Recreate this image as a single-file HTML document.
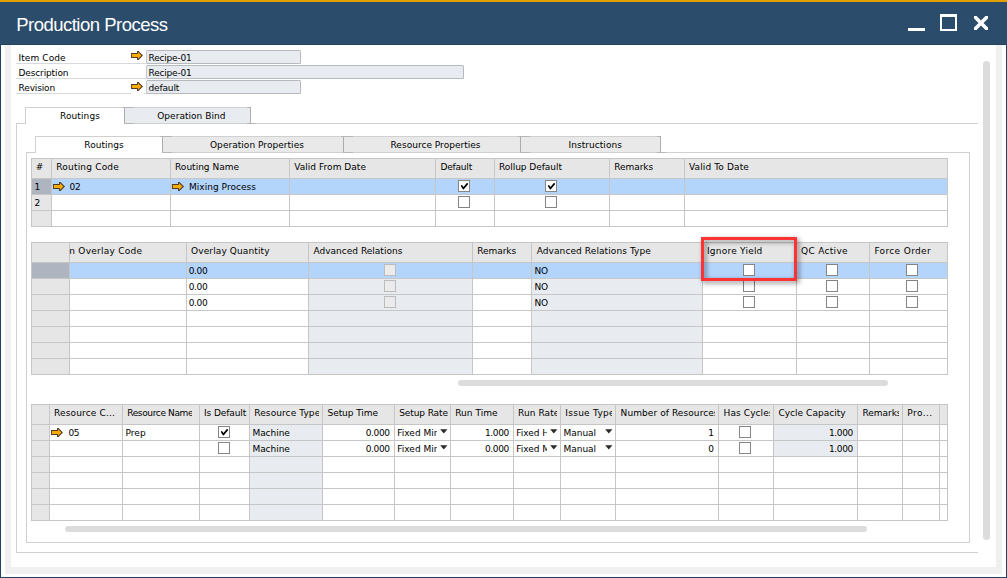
<!DOCTYPE html>
<html lang="en"><head><meta charset="utf-8"><title>Production Process</title>
<style>
html,body{margin:0;padding:0;background:#fff}
#w{position:relative;width:1007px;height:578px;overflow:hidden;font-family:"DejaVu Sans","Liberation Sans",sans-serif;font-size:9px;line-height:12px;color:#000}
#w div,#w svg.ar,#w span.t,#w span.title{position:absolute;box-sizing:content-box}
#w span.t,#w span.title{white-space:nowrap;display:block}
#w span.title{font-family:"Liberation Sans",sans-serif;font-size:18.5px;line-height:22px;color:#fff}
#w div.cb{width:10px;height:10px;border:1px solid #858585;background:#fff}
#w div.cb svg{position:absolute;left:0;top:0}
#w div.clip{overflow:hidden;height:12px}
#w div.clip span.t{left:0;top:0}
</style></head>
<body>
<div id="w">
<div style="left:0px;top:0px;width:1007px;height:578px;background:#fff;"></div>
<div style="left:0px;top:0px;width:1007px;height:2px;background:#e5a000;"></div>
<div style="left:0px;top:2px;width:1007px;height:43px;background:#2b4c6b;"></div>
<div style="left:0px;top:44px;width:1007px;height:1px;background:#234160;"></div>
<div style="left:0px;top:45px;width:1px;height:533px;background:#1f4566;"></div>
<div style="left:1006px;top:45px;width:1px;height:533px;background:#1f4566;"></div>
<div style="left:0px;top:577px;width:1007px;height:1px;background:#1f4566;"></div>
<div style="left:5px;top:45px;width:6px;height:529px;background:#f0f0f0;"></div>
<div style="left:996px;top:45px;width:6px;height:529px;background:#f0f0f0;"></div>
<div style="left:5px;top:567px;width:997px;height:7px;background:#f0f0f0;"></div>
<div style="left:908px;top:28px;width:17px;height:3px;background:#fff;"></div>
<div style="left:940px;top:14px;width:13px;height:12px;border:2px solid #fff;border-top-width:3px;background:transparent"></div>
<svg class="ar" style="left:973.5px;top:15.5px" width="14" height="14" viewBox="0 0 14 14"><path d="M-1 -1L15 15M15 -1L-1 15" stroke="#fff" stroke-width="3.6" fill="none"/></svg>
<div style="left:983px;top:61px;width:7px;height:479px;background:#dcdcdc;border-radius:3.5px"></div>
<div style="left:16px;top:63px;width:130px;height:1px;background:#d6dade;"></div>
<div style="left:146px;top:50px;width:153px;height:12px;background:#e8ecf0;border:1px solid #b6babf;border-left-color:#c4c8cc;border-radius:1.5px"></div>
<svg class="ar" style="left:131px;top:51px" width="12" height="9" viewBox="0 0 12 9"><path d="M0 2H6V0H7.5L12 4.5L7.5 9H6V7H0Z" fill="#4d3b2e"/><path d="M0.9 2.9H6.9V1L10.5 4.5L6.9 8V6.1H0.9Z" fill="#f9ab00"/></svg>
<div style="left:16px;top:78px;width:130px;height:1px;background:#d6dade;"></div>
<div style="left:146px;top:65px;width:316px;height:12px;background:#e8ecf0;border:1px solid #b6babf;border-left-color:#c4c8cc;border-radius:1.5px"></div>
<div style="left:16px;top:93px;width:115px;height:1px;background:#d6dade;"></div>
<div style="left:144px;top:93px;width:2px;height:1px;background:#d6dade;"></div>
<div style="left:146px;top:80px;width:153px;height:12px;background:#e8ecf0;border:1px solid #b6babf;border-left-color:#c4c8cc;border-radius:1.5px"></div>
<svg class="ar" style="left:131px;top:82px" width="12" height="9" viewBox="0 0 12 9"><path d="M0 2H6V0H7.5L12 4.5L7.5 9H6V7H0Z" fill="#4d3b2e"/><path d="M0.9 2.9H6.9V1L10.5 4.5L6.9 8V6.1H0.9Z" fill="#f9ab00"/></svg>
<div style="left:16px;top:123px;width:962px;height:1px;background:#d0d0d0;"></div>
<div style="left:16px;top:123px;width:1px;height:430px;background:#d0d0d0;"></div>
<div style="left:16px;top:552px;width:962px;height:1px;background:#d0d0d0;"></div>
<div style="left:25px;top:107px;width:98px;height:16px;background:#fff;border:1px solid #d0d0d0;border-bottom:none"></div>
<div style="left:125px;top:107px;width:125px;height:15px;background:#e8ecf0;border:1px solid #d0d0d0;border-left:none"></div>
<div style="left:124px;top:107px;width:1px;height:17px;background:#adadad;"></div>
<div style="left:122px;top:107px;width:12px;height:1px;background:#b6b6b6;"></div>
<div style="left:124px;top:123px;width:10px;height:1px;background:#b6b6b6;"></div>
<div style="left:250px;top:107px;width:1px;height:17px;background:#adadad;"></div>
<div style="left:247px;top:107px;width:3px;height:1px;background:#b6b6b6;"></div>
<div style="left:247px;top:123px;width:9px;height:1px;background:#b6b6b6;"></div>
<div style="left:26px;top:152px;width:944px;height:1px;background:#d0d0d0;"></div>
<div style="left:26px;top:152px;width:1px;height:391px;background:#d0d0d0;"></div>
<div style="left:26px;top:542px;width:944px;height:1px;background:#d0d0d0;"></div>
<div style="left:969px;top:152px;width:1px;height:391px;background:#d0d0d0;"></div>
<div style="left:35px;top:136px;width:126px;height:16px;background:#fff;border:1px solid #d0d0d0;border-bottom:none"></div>
<div style="left:163px;top:136px;width:180px;height:15px;background:#e9e9e9;border:1px solid #d0d0d0;border-left:none"></div>
<div style="left:344px;top:136px;width:176px;height:15px;background:#e9e9e9;border:1px solid #d0d0d0;border-left:none"></div>
<div style="left:521px;top:136px;width:139px;height:15px;background:#e9e9e9;border:1px solid #d0d0d0;border-left:none"></div>
<div style="left:162px;top:136px;width:1px;height:17px;background:#adadad;"></div>
<div style="left:160px;top:136px;width:12px;height:1px;background:#b6b6b6;"></div>
<div style="left:162px;top:152px;width:10px;height:1px;background:#b6b6b6;"></div>
<div style="left:343px;top:136px;width:1px;height:17px;background:#adadad;"></div>
<div style="left:341px;top:136px;width:12px;height:1px;background:#b6b6b6;"></div>
<div style="left:343px;top:152px;width:10px;height:1px;background:#b6b6b6;"></div>
<div style="left:520px;top:136px;width:1px;height:17px;background:#adadad;"></div>
<div style="left:518px;top:136px;width:12px;height:1px;background:#b6b6b6;"></div>
<div style="left:520px;top:152px;width:10px;height:1px;background:#b6b6b6;"></div>
<div style="left:660px;top:136px;width:1px;height:17px;background:#adadad;"></div>
<div style="left:657px;top:136px;width:3px;height:1px;background:#b6b6b6;"></div>
<div style="left:657px;top:152px;width:9px;height:1px;background:#b6b6b6;"></div>
<div style="left:31px;top:158px;width:917px;height:69px;background:#c6c6c6;"></div>
<div style="left:32px;top:159px;width:19px;height:19px;background:#e6e6e6;"></div>
<div style="left:52px;top:159px;width:118px;height:19px;background:#e6e6e6;"></div>
<div style="left:171px;top:159px;width:118px;height:19px;background:#e6e6e6;"></div>
<div style="left:290px;top:159px;width:145px;height:19px;background:#e6e6e6;"></div>
<div style="left:436px;top:159px;width:58px;height:19px;background:#e6e6e6;"></div>
<div style="left:495px;top:159px;width:114px;height:19px;background:#e6e6e6;"></div>
<div style="left:610px;top:159px;width:74px;height:19px;background:#e6e6e6;"></div>
<div style="left:685px;top:159px;width:262px;height:19px;background:#e6e6e6;"></div>
<div style="left:32px;top:179px;width:19px;height:15px;background:#aeb5c1;"></div>
<div style="left:52px;top:179px;width:118px;height:15px;background:#b3d4fb;"></div>
<div style="left:171px;top:179px;width:118px;height:15px;background:#b3d4fb;"></div>
<div style="left:290px;top:179px;width:145px;height:15px;background:#b3d4fb;"></div>
<div style="left:436px;top:179px;width:58px;height:15px;background:#b3d4fb;"></div>
<div style="left:495px;top:179px;width:114px;height:15px;background:#b3d4fb;"></div>
<div style="left:610px;top:179px;width:74px;height:15px;background:#b3d4fb;"></div>
<div style="left:685px;top:179px;width:262px;height:15px;background:#b3d4fb;"></div>
<div style="left:32px;top:195px;width:19px;height:15px;background:#e6e6e6;"></div>
<div style="left:52px;top:195px;width:118px;height:15px;background:#fff;"></div>
<div style="left:171px;top:195px;width:118px;height:15px;background:#fff;"></div>
<div style="left:290px;top:195px;width:145px;height:15px;background:#fff;"></div>
<div style="left:436px;top:195px;width:58px;height:15px;background:#fff;"></div>
<div style="left:495px;top:195px;width:114px;height:15px;background:#fff;"></div>
<div style="left:610px;top:195px;width:74px;height:15px;background:#fff;"></div>
<div style="left:685px;top:195px;width:262px;height:15px;background:#fff;"></div>
<div style="left:32px;top:211px;width:19px;height:15px;background:#e6e6e6;"></div>
<div style="left:52px;top:211px;width:118px;height:15px;background:#fff;"></div>
<div style="left:171px;top:211px;width:118px;height:15px;background:#fff;"></div>
<div style="left:290px;top:211px;width:145px;height:15px;background:#fff;"></div>
<div style="left:436px;top:211px;width:58px;height:15px;background:#fff;"></div>
<div style="left:495px;top:211px;width:114px;height:15px;background:#fff;"></div>
<div style="left:610px;top:211px;width:74px;height:15px;background:#fff;"></div>
<div style="left:685px;top:211px;width:262px;height:15px;background:#fff;"></div>
<svg class="ar" style="left:53px;top:182px" width="12" height="9" viewBox="0 0 12 9"><path d="M0 2H6V0H7.5L12 4.5L7.5 9H6V7H0Z" fill="#4d3b2e"/><path d="M0.9 2.9H6.9V1L10.5 4.5L6.9 8V6.1H0.9Z" fill="#f9ab00"/></svg>
<svg class="ar" style="left:172px;top:182px" width="12" height="9" viewBox="0 0 12 9"><path d="M0 2H6V0H7.5L12 4.5L7.5 9H6V7H0Z" fill="#4d3b2e"/><path d="M0.9 2.9H6.9V1L10.5 4.5L6.9 8V6.1H0.9Z" fill="#f9ab00"/></svg>
<div class="cb" style="left:458px;top:180px"><svg width="10" height="10" viewBox="0 0 10 10"><path d="M2.7 4.9L4.4 7.5L8.2 2.9" fill="none" stroke="#000" stroke-width="1.7" stroke-linecap="round" stroke-linejoin="round"/></svg></div>
<div class="cb" style="left:545px;top:180px"><svg width="10" height="10" viewBox="0 0 10 10"><path d="M2.7 4.9L4.4 7.5L8.2 2.9" fill="none" stroke="#000" stroke-width="1.7" stroke-linecap="round" stroke-linejoin="round"/></svg></div>
<div class="cb" style="left:458px;top:196px"></div>
<div class="cb" style="left:545px;top:196px"></div>
<div style="left:31px;top:242px;width:917px;height:133px;background:#c6c6c6;"></div>
<div style="left:32px;top:243px;width:37px;height:19px;background:#e6e6e6;"></div>
<div style="left:70px;top:243px;width:116px;height:19px;background:#e6e6e6;"></div>
<div style="left:187px;top:243px;width:121px;height:19px;background:#e6e6e6;"></div>
<div style="left:309px;top:243px;width:163px;height:19px;background:#e6e6e6;"></div>
<div style="left:473px;top:243px;width:58px;height:19px;background:#e6e6e6;"></div>
<div style="left:532px;top:243px;width:170px;height:19px;background:#e6e6e6;"></div>
<div style="left:703px;top:243px;width:93px;height:19px;background:#e6e6e6;"></div>
<div style="left:797px;top:243px;width:72px;height:19px;background:#e6e6e6;"></div>
<div style="left:870px;top:243px;width:77px;height:19px;background:#e6e6e6;"></div>
<div style="left:32px;top:263px;width:37px;height:15px;background:#aeb5c1;"></div>
<div style="left:70px;top:263px;width:116px;height:15px;background:#b3d4fb;"></div>
<div style="left:187px;top:263px;width:121px;height:15px;background:#b3d4fb;"></div>
<div style="left:309px;top:263px;width:163px;height:15px;background:#b3d4fb;"></div>
<div style="left:473px;top:263px;width:58px;height:15px;background:#b3d4fb;"></div>
<div style="left:532px;top:263px;width:170px;height:15px;background:#b3d4fb;"></div>
<div style="left:703px;top:263px;width:93px;height:15px;background:#b3d4fb;"></div>
<div style="left:797px;top:263px;width:72px;height:15px;background:#b3d4fb;"></div>
<div style="left:870px;top:263px;width:77px;height:15px;background:#b3d4fb;"></div>
<div style="left:32px;top:279px;width:37px;height:15px;background:#e6e6e6;"></div>
<div style="left:70px;top:279px;width:116px;height:15px;background:#fff;"></div>
<div style="left:187px;top:279px;width:121px;height:15px;background:#fff;"></div>
<div style="left:309px;top:279px;width:163px;height:15px;background:#e8ecf0;"></div>
<div style="left:473px;top:279px;width:58px;height:15px;background:#fff;"></div>
<div style="left:532px;top:279px;width:170px;height:15px;background:#e8ecf0;"></div>
<div style="left:703px;top:279px;width:93px;height:15px;background:#fff;"></div>
<div style="left:797px;top:279px;width:72px;height:15px;background:#fff;"></div>
<div style="left:870px;top:279px;width:77px;height:15px;background:#fff;"></div>
<div style="left:32px;top:295px;width:37px;height:15px;background:#e6e6e6;"></div>
<div style="left:70px;top:295px;width:116px;height:15px;background:#fff;"></div>
<div style="left:187px;top:295px;width:121px;height:15px;background:#fff;"></div>
<div style="left:309px;top:295px;width:163px;height:15px;background:#e8ecf0;"></div>
<div style="left:473px;top:295px;width:58px;height:15px;background:#fff;"></div>
<div style="left:532px;top:295px;width:170px;height:15px;background:#e8ecf0;"></div>
<div style="left:703px;top:295px;width:93px;height:15px;background:#fff;"></div>
<div style="left:797px;top:295px;width:72px;height:15px;background:#fff;"></div>
<div style="left:870px;top:295px;width:77px;height:15px;background:#fff;"></div>
<div style="left:32px;top:311px;width:37px;height:15px;background:#e6e6e6;"></div>
<div style="left:70px;top:311px;width:116px;height:15px;background:#fff;"></div>
<div style="left:187px;top:311px;width:121px;height:15px;background:#fff;"></div>
<div style="left:309px;top:311px;width:163px;height:15px;background:#e8ecf0;"></div>
<div style="left:473px;top:311px;width:58px;height:15px;background:#fff;"></div>
<div style="left:532px;top:311px;width:170px;height:15px;background:#e8ecf0;"></div>
<div style="left:703px;top:311px;width:93px;height:15px;background:#fff;"></div>
<div style="left:797px;top:311px;width:72px;height:15px;background:#fff;"></div>
<div style="left:870px;top:311px;width:77px;height:15px;background:#fff;"></div>
<div style="left:32px;top:327px;width:37px;height:15px;background:#e6e6e6;"></div>
<div style="left:70px;top:327px;width:116px;height:15px;background:#fff;"></div>
<div style="left:187px;top:327px;width:121px;height:15px;background:#fff;"></div>
<div style="left:309px;top:327px;width:163px;height:15px;background:#e8ecf0;"></div>
<div style="left:473px;top:327px;width:58px;height:15px;background:#fff;"></div>
<div style="left:532px;top:327px;width:170px;height:15px;background:#e8ecf0;"></div>
<div style="left:703px;top:327px;width:93px;height:15px;background:#fff;"></div>
<div style="left:797px;top:327px;width:72px;height:15px;background:#fff;"></div>
<div style="left:870px;top:327px;width:77px;height:15px;background:#fff;"></div>
<div style="left:32px;top:343px;width:37px;height:15px;background:#e6e6e6;"></div>
<div style="left:70px;top:343px;width:116px;height:15px;background:#fff;"></div>
<div style="left:187px;top:343px;width:121px;height:15px;background:#fff;"></div>
<div style="left:309px;top:343px;width:163px;height:15px;background:#e8ecf0;"></div>
<div style="left:473px;top:343px;width:58px;height:15px;background:#fff;"></div>
<div style="left:532px;top:343px;width:170px;height:15px;background:#e8ecf0;"></div>
<div style="left:703px;top:343px;width:93px;height:15px;background:#fff;"></div>
<div style="left:797px;top:343px;width:72px;height:15px;background:#fff;"></div>
<div style="left:870px;top:343px;width:77px;height:15px;background:#fff;"></div>
<div style="left:32px;top:359px;width:37px;height:15px;background:#e6e6e6;"></div>
<div style="left:70px;top:359px;width:116px;height:15px;background:#fff;"></div>
<div style="left:187px;top:359px;width:121px;height:15px;background:#fff;"></div>
<div style="left:309px;top:359px;width:163px;height:15px;background:#e8ecf0;"></div>
<div style="left:473px;top:359px;width:58px;height:15px;background:#fff;"></div>
<div style="left:532px;top:359px;width:170px;height:15px;background:#e8ecf0;"></div>
<div style="left:703px;top:359px;width:93px;height:15px;background:#fff;"></div>
<div style="left:797px;top:359px;width:72px;height:15px;background:#fff;"></div>
<div style="left:870px;top:359px;width:77px;height:15px;background:#fff;"></div>
<div class="cb" style="left:384px;top:264px;background:#ebebeb;border-color:#bcbcbc"></div>
<div class="cb" style="left:743px;top:264px"></div>
<div class="cb" style="left:826px;top:264px"></div>
<div class="cb" style="left:906px;top:264px"></div>
<div class="cb" style="left:384px;top:280px;background:#ebebeb;border-color:#bcbcbc"></div>
<div class="cb" style="left:743px;top:280px"></div>
<div class="cb" style="left:826px;top:280px"></div>
<div class="cb" style="left:906px;top:280px"></div>
<div class="cb" style="left:384px;top:296px;background:#ebebeb;border-color:#bcbcbc"></div>
<div class="cb" style="left:743px;top:296px"></div>
<div class="cb" style="left:826px;top:296px"></div>
<div class="cb" style="left:906px;top:296px"></div>
<div style="left:458px;top:380px;width:430px;height:6px;background:#dcdcdc;border-radius:3px"></div>
<div style="left:701px;top:237px;width:90px;height:38px;border:3px solid #ff3333;background:transparent;filter:drop-shadow(2px 2px 2.5px rgba(0,0,0,.5))"></div>
<div style="left:31px;top:404px;width:917px;height:117px;background:#c6c6c6;"></div>
<div style="left:32px;top:405px;width:17px;height:19px;background:#e6e6e6;"></div>
<div style="left:50px;top:405px;width:72px;height:19px;background:#e6e6e6;"></div>
<div style="left:123px;top:405px;width:76px;height:19px;background:#e6e6e6;"></div>
<div style="left:200px;top:405px;width:49px;height:19px;background:#e6e6e6;"></div>
<div style="left:250px;top:405px;width:72px;height:19px;background:#e6e6e6;"></div>
<div style="left:323px;top:405px;width:71px;height:19px;background:#e6e6e6;"></div>
<div style="left:395px;top:405px;width:55px;height:19px;background:#e6e6e6;"></div>
<div style="left:451px;top:405px;width:62px;height:19px;background:#e6e6e6;"></div>
<div style="left:514px;top:405px;width:46px;height:19px;background:#e6e6e6;"></div>
<div style="left:561px;top:405px;width:54px;height:19px;background:#e6e6e6;"></div>
<div style="left:616px;top:405px;width:102px;height:19px;background:#e6e6e6;"></div>
<div style="left:719px;top:405px;width:54px;height:19px;background:#e6e6e6;"></div>
<div style="left:774px;top:405px;width:83px;height:19px;background:#e6e6e6;"></div>
<div style="left:858px;top:405px;width:44px;height:19px;background:#e6e6e6;"></div>
<div style="left:903px;top:405px;width:36px;height:19px;background:#e6e6e6;"></div>
<div style="left:940px;top:405px;width:7px;height:19px;background:#e6e6e6;"></div>
<div style="left:32px;top:425px;width:17px;height:15px;background:#e6e6e6;"></div>
<div style="left:50px;top:425px;width:72px;height:15px;background:#fff;"></div>
<div style="left:123px;top:425px;width:76px;height:15px;background:#fff;"></div>
<div style="left:200px;top:425px;width:49px;height:15px;background:#fff;"></div>
<div style="left:250px;top:425px;width:72px;height:15px;background:#e8ecf0;"></div>
<div style="left:323px;top:425px;width:71px;height:15px;background:#fff;"></div>
<div style="left:395px;top:425px;width:55px;height:15px;background:#fff;"></div>
<div style="left:451px;top:425px;width:62px;height:15px;background:#fff;"></div>
<div style="left:514px;top:425px;width:46px;height:15px;background:#fff;"></div>
<div style="left:561px;top:425px;width:54px;height:15px;background:#fff;"></div>
<div style="left:616px;top:425px;width:102px;height:15px;background:#fff;"></div>
<div style="left:719px;top:425px;width:54px;height:15px;background:#fff;"></div>
<div style="left:774px;top:425px;width:83px;height:15px;background:#e8ecf0;"></div>
<div style="left:858px;top:425px;width:44px;height:15px;background:#fff;"></div>
<div style="left:903px;top:425px;width:36px;height:15px;background:#fff;"></div>
<div style="left:940px;top:425px;width:7px;height:15px;background:#fff;"></div>
<div style="left:32px;top:441px;width:17px;height:15px;background:#e6e6e6;"></div>
<div style="left:50px;top:441px;width:72px;height:15px;background:#fff;"></div>
<div style="left:123px;top:441px;width:76px;height:15px;background:#fff;"></div>
<div style="left:200px;top:441px;width:49px;height:15px;background:#fff;"></div>
<div style="left:250px;top:441px;width:72px;height:15px;background:#e8ecf0;"></div>
<div style="left:323px;top:441px;width:71px;height:15px;background:#fff;"></div>
<div style="left:395px;top:441px;width:55px;height:15px;background:#fff;"></div>
<div style="left:451px;top:441px;width:62px;height:15px;background:#fff;"></div>
<div style="left:514px;top:441px;width:46px;height:15px;background:#fff;"></div>
<div style="left:561px;top:441px;width:54px;height:15px;background:#fff;"></div>
<div style="left:616px;top:441px;width:102px;height:15px;background:#fff;"></div>
<div style="left:719px;top:441px;width:54px;height:15px;background:#fff;"></div>
<div style="left:774px;top:441px;width:83px;height:15px;background:#e8ecf0;"></div>
<div style="left:858px;top:441px;width:44px;height:15px;background:#fff;"></div>
<div style="left:903px;top:441px;width:36px;height:15px;background:#fff;"></div>
<div style="left:940px;top:441px;width:7px;height:15px;background:#fff;"></div>
<div style="left:32px;top:457px;width:17px;height:15px;background:#e6e6e6;"></div>
<div style="left:50px;top:457px;width:72px;height:15px;background:#fff;"></div>
<div style="left:123px;top:457px;width:76px;height:15px;background:#fff;"></div>
<div style="left:200px;top:457px;width:49px;height:15px;background:#fff;"></div>
<div style="left:250px;top:457px;width:72px;height:15px;background:#e8ecf0;"></div>
<div style="left:323px;top:457px;width:71px;height:15px;background:#fff;"></div>
<div style="left:395px;top:457px;width:55px;height:15px;background:#fff;"></div>
<div style="left:451px;top:457px;width:62px;height:15px;background:#fff;"></div>
<div style="left:514px;top:457px;width:46px;height:15px;background:#fff;"></div>
<div style="left:561px;top:457px;width:54px;height:15px;background:#fff;"></div>
<div style="left:616px;top:457px;width:102px;height:15px;background:#fff;"></div>
<div style="left:719px;top:457px;width:54px;height:15px;background:#fff;"></div>
<div style="left:774px;top:457px;width:83px;height:15px;background:#fff;"></div>
<div style="left:858px;top:457px;width:44px;height:15px;background:#fff;"></div>
<div style="left:903px;top:457px;width:36px;height:15px;background:#fff;"></div>
<div style="left:940px;top:457px;width:7px;height:15px;background:#fff;"></div>
<div style="left:32px;top:473px;width:17px;height:15px;background:#e6e6e6;"></div>
<div style="left:50px;top:473px;width:72px;height:15px;background:#fff;"></div>
<div style="left:123px;top:473px;width:76px;height:15px;background:#fff;"></div>
<div style="left:200px;top:473px;width:49px;height:15px;background:#fff;"></div>
<div style="left:250px;top:473px;width:72px;height:15px;background:#e8ecf0;"></div>
<div style="left:323px;top:473px;width:71px;height:15px;background:#fff;"></div>
<div style="left:395px;top:473px;width:55px;height:15px;background:#fff;"></div>
<div style="left:451px;top:473px;width:62px;height:15px;background:#fff;"></div>
<div style="left:514px;top:473px;width:46px;height:15px;background:#fff;"></div>
<div style="left:561px;top:473px;width:54px;height:15px;background:#fff;"></div>
<div style="left:616px;top:473px;width:102px;height:15px;background:#fff;"></div>
<div style="left:719px;top:473px;width:54px;height:15px;background:#fff;"></div>
<div style="left:774px;top:473px;width:83px;height:15px;background:#fff;"></div>
<div style="left:858px;top:473px;width:44px;height:15px;background:#fff;"></div>
<div style="left:903px;top:473px;width:36px;height:15px;background:#fff;"></div>
<div style="left:940px;top:473px;width:7px;height:15px;background:#fff;"></div>
<div style="left:32px;top:489px;width:17px;height:15px;background:#e6e6e6;"></div>
<div style="left:50px;top:489px;width:72px;height:15px;background:#fff;"></div>
<div style="left:123px;top:489px;width:76px;height:15px;background:#fff;"></div>
<div style="left:200px;top:489px;width:49px;height:15px;background:#fff;"></div>
<div style="left:250px;top:489px;width:72px;height:15px;background:#e8ecf0;"></div>
<div style="left:323px;top:489px;width:71px;height:15px;background:#fff;"></div>
<div style="left:395px;top:489px;width:55px;height:15px;background:#fff;"></div>
<div style="left:451px;top:489px;width:62px;height:15px;background:#fff;"></div>
<div style="left:514px;top:489px;width:46px;height:15px;background:#fff;"></div>
<div style="left:561px;top:489px;width:54px;height:15px;background:#fff;"></div>
<div style="left:616px;top:489px;width:102px;height:15px;background:#fff;"></div>
<div style="left:719px;top:489px;width:54px;height:15px;background:#fff;"></div>
<div style="left:774px;top:489px;width:83px;height:15px;background:#fff;"></div>
<div style="left:858px;top:489px;width:44px;height:15px;background:#fff;"></div>
<div style="left:903px;top:489px;width:36px;height:15px;background:#fff;"></div>
<div style="left:940px;top:489px;width:7px;height:15px;background:#fff;"></div>
<div style="left:32px;top:505px;width:17px;height:15px;background:#e6e6e6;"></div>
<div style="left:50px;top:505px;width:72px;height:15px;background:#fff;"></div>
<div style="left:123px;top:505px;width:76px;height:15px;background:#fff;"></div>
<div style="left:200px;top:505px;width:49px;height:15px;background:#fff;"></div>
<div style="left:250px;top:505px;width:72px;height:15px;background:#e8ecf0;"></div>
<div style="left:323px;top:505px;width:71px;height:15px;background:#fff;"></div>
<div style="left:395px;top:505px;width:55px;height:15px;background:#fff;"></div>
<div style="left:451px;top:505px;width:62px;height:15px;background:#fff;"></div>
<div style="left:514px;top:505px;width:46px;height:15px;background:#fff;"></div>
<div style="left:561px;top:505px;width:54px;height:15px;background:#fff;"></div>
<div style="left:616px;top:505px;width:102px;height:15px;background:#fff;"></div>
<div style="left:719px;top:505px;width:54px;height:15px;background:#fff;"></div>
<div style="left:774px;top:505px;width:83px;height:15px;background:#fff;"></div>
<div style="left:858px;top:505px;width:44px;height:15px;background:#fff;"></div>
<div style="left:903px;top:505px;width:36px;height:15px;background:#fff;"></div>
<div style="left:940px;top:505px;width:7px;height:15px;background:#fff;"></div>
<svg class="ar" style="left:439.7px;top:428.7px" width="8" height="5" viewBox="0 0 8 5"><path d="M0.2 0.3H7.4L3.8 4.6Z" fill="#2a2a2a"/></svg>
<svg class="ar" style="left:550.3px;top:428.7px" width="8" height="5" viewBox="0 0 8 5"><path d="M0.2 0.3H7.4L3.8 4.6Z" fill="#2a2a2a"/></svg>
<svg class="ar" style="left:604.6px;top:428.7px" width="8" height="5" viewBox="0 0 8 5"><path d="M0.2 0.3H7.4L3.8 4.6Z" fill="#2a2a2a"/></svg>
<div class="cb" style="left:218px;top:426px"><svg width="10" height="10" viewBox="0 0 10 10"><path d="M2.7 4.9L4.4 7.5L8.2 2.9" fill="none" stroke="#000" stroke-width="1.7" stroke-linecap="round" stroke-linejoin="round"/></svg></div>
<div class="cb" style="left:739px;top:426px"></div>
<svg class="ar" style="left:439.7px;top:444.7px" width="8" height="5" viewBox="0 0 8 5"><path d="M0.2 0.3H7.4L3.8 4.6Z" fill="#2a2a2a"/></svg>
<svg class="ar" style="left:550.3px;top:444.7px" width="8" height="5" viewBox="0 0 8 5"><path d="M0.2 0.3H7.4L3.8 4.6Z" fill="#2a2a2a"/></svg>
<svg class="ar" style="left:604.6px;top:444.7px" width="8" height="5" viewBox="0 0 8 5"><path d="M0.2 0.3H7.4L3.8 4.6Z" fill="#2a2a2a"/></svg>
<div class="cb" style="left:218px;top:442px"></div>
<div class="cb" style="left:739px;top:442px"></div>
<svg class="ar" style="left:51px;top:428px" width="12" height="9" viewBox="0 0 12 9"><path d="M0 2H6V0H7.5L12 4.5L7.5 9H6V7H0Z" fill="#4d3b2e"/><path d="M0.9 2.9H6.9V1L10.5 4.5L6.9 8V6.1H0.9Z" fill="#f9ab00"/></svg>
<div style="left:65px;top:526px;width:802px;height:6px;background:#dcdcdc;border-radius:3px"></div>
<span class="title" style="left:16.2px;top:14px;letter-spacing:-0.51px;">Production Process</span>
<span class="t" style="left:18.5px;top:52px;letter-spacing:0.09px;">Item Code</span>
<span class="t" style="left:148.5px;top:52px;letter-spacing:-0.19px;">Recipe-01</span>
<span class="t" style="left:18.5px;top:67px;letter-spacing:-0.13px;">Description</span>
<span class="t" style="left:148.5px;top:67px;letter-spacing:-0.19px;">Recipe-01</span>
<span class="t" style="left:18.5px;top:82px;letter-spacing:-0.13px;">Revision</span>
<span class="t" style="left:148.5px;top:82px;letter-spacing:-0.15px;">default</span>
<span class="t" style="left:60px;top:110px;letter-spacing:0.10px;">Routings</span>
<span class="t" style="left:157.2px;top:110px;letter-spacing:0.04px;">Operation Bind</span>
<span class="t" style="left:84.3px;top:139px;letter-spacing:0.04px;">Routings</span>
<span class="t" style="left:210px;top:139px;letter-spacing:0.04px;">Operation Properties</span>
<span class="t" style="left:390.5px;top:139px;letter-spacing:0.02px;">Resource Properties</span>
<span class="t" style="left:568.5px;top:139px;letter-spacing:0.05px;">Instructions</span>
<span class="t" style="left:35.8px;top:161px;">#</span>
<span class="t" style="left:34.5px;top:181px;">1</span>
<span class="t" style="left:34.5px;top:197px;">2</span>
<span class="t" style="left:56.3px;top:161px;letter-spacing:0.19px;">Routing Code</span>
<span class="t" style="left:175px;top:161px;letter-spacing:0.01px;">Routing Name</span>
<span class="t" style="left:294.2px;top:161px;letter-spacing:0.04px;">Valid From Date</span>
<span class="t" style="left:440.5px;top:161px;letter-spacing:-0.20px;">Default</span>
<span class="t" style="left:499px;top:161px;letter-spacing:-0.04px;">Rollup Default</span>
<span class="t" style="left:614.3px;top:161px;letter-spacing:-0.08px;">Remarks</span>
<span class="t" style="left:689px;top:161px;letter-spacing:0.12px;">Valid To Date</span>
<span class="t" style="left:69.5px;top:181px;letter-spacing:-0.35px;">02</span>
<span class="t" style="left:189px;top:181px;letter-spacing:0.03px;">Mixing Process</span>
<span class="t" style="left:69.3px;top:245px;letter-spacing:0.25px;">n Overlay Code</span>
<span class="t" style="left:191px;top:245px;letter-spacing:0.12px;">Overlay Quantity</span>
<span class="t" style="left:313.4px;top:245px;letter-spacing:0.02px;">Advanced Relations</span>
<span class="t" style="left:477.2px;top:245px;letter-spacing:-0.04px;">Remarks</span>
<span class="t" style="left:536.7px;top:245px;letter-spacing:0.09px;">Advanced Relations Type</span>
<span class="t" style="left:707px;top:245px;letter-spacing:0.22px;">Ignore Yield</span>
<span class="t" style="left:801px;top:245px;letter-spacing:0.32px;">QC Active</span>
<span class="t" style="left:874.4px;top:245px;letter-spacing:0.35px;">Force Order</span>
<span class="t" style="left:188.7px;top:265px;letter-spacing:-0.35px;">0.00</span>
<span class="t" style="left:534.4px;top:265px;">NO</span>
<span class="t" style="left:188.7px;top:281px;letter-spacing:-0.35px;">0.00</span>
<span class="t" style="left:534.4px;top:281px;">NO</span>
<span class="t" style="left:188.7px;top:297px;letter-spacing:-0.35px;">0.00</span>
<span class="t" style="left:534.4px;top:297px;">NO</span>
<span class="t" style="left:54px;top:407px;letter-spacing:0.15px;">Resource C...</span>
<div class="clip" style="left:127.2px;top:407px;width:65.2px"><span class="t" style="letter-spacing:-0.36px;">Resource Name</span></div>
<span class="t" style="left:204px;top:407px;letter-spacing:-0.09px;">Is Default</span>
<div class="clip" style="left:254.3px;top:407px;width:65.0px"><span class="t" style="letter-spacing:0.09px;">Resource Type</span></div>
<span class="t" style="left:327.5px;top:407px;letter-spacing:-0.06px;">Setup Time</span>
<span class="t" style="left:399.2px;top:407px;letter-spacing:-0.10px;">Setup Rate</span>
<span class="t" style="left:455.2px;top:407px;letter-spacing:0.04px;">Run Time</span>
<div class="clip" style="left:518px;top:407px;width:39.0px"><span class="t" style="letter-spacing:0.09px;">Run Rate</span></div>
<div class="clip" style="left:565.3px;top:407px;width:46.7px"><span class="t" style="letter-spacing:0.27px;">Issue Type</span></div>
<div class="clip" style="left:620.6px;top:407px;width:94.7px"><span class="t" style="letter-spacing:0.08px;">Number of Resources</span></div>
<div class="clip" style="left:723.6px;top:407px;width:46.9px"><span class="t" style="letter-spacing:0.09px;">Has Cycles</span></div>
<span class="t" style="left:778.4px;top:407px;letter-spacing:0.04px;">Cycle Capacity</span>
<div class="clip" style="left:862.5px;top:407px;width:36.5px"><span class="t" style="letter-spacing:-0.04px;">Remarks</span></div>
<span class="t" style="left:907.3px;top:407px;letter-spacing:0.43px;">Pro...</span>
<span class="t" style="left:252.4px;top:427px;letter-spacing:-0.03px;">Machine</span>
<span class="t" style="right:617.3px;top:427px;letter-spacing:-0.35px;">0.000</span>
<div class="clip" style="left:397.3px;top:427px;width:39.6px"><span class="t" style="">Fixed Min</span></div>
<span class="t" style="right:498.0px;top:427px;letter-spacing:-0.35px;">1.000</span>
<div class="clip" style="left:516.2px;top:427px;width:30.8px"><span class="t" style="">Fixed H</span></div>
<span class="t" style="left:563.4px;top:427px;letter-spacing:-0.00px;">Manual</span>
<span class="t" style="right:293.0px;top:427px;">1</span>
<span class="t" style="right:154.0px;top:427px;letter-spacing:-0.35px;">1.000</span>
<span class="t" style="left:252.4px;top:443px;letter-spacing:-0.03px;">Machine</span>
<span class="t" style="right:617.3px;top:443px;letter-spacing:-0.35px;">0.000</span>
<div class="clip" style="left:397.3px;top:443px;width:39.6px"><span class="t" style="">Fixed Min</span></div>
<span class="t" style="right:498.0px;top:443px;letter-spacing:-0.35px;">0.000</span>
<div class="clip" style="left:516.2px;top:443px;width:30.8px"><span class="t" style="">Fixed M</span></div>
<span class="t" style="left:563.4px;top:443px;letter-spacing:-0.00px;">Manual</span>
<span class="t" style="right:293.0px;top:443px;">0</span>
<span class="t" style="right:154.0px;top:443px;letter-spacing:-0.35px;">1.000</span>
<span class="t" style="left:68.4px;top:427px;letter-spacing:-0.35px;">05</span>
<span class="t" style="left:125.6px;top:427px;">Prep</span>
</div>
</body></html>
